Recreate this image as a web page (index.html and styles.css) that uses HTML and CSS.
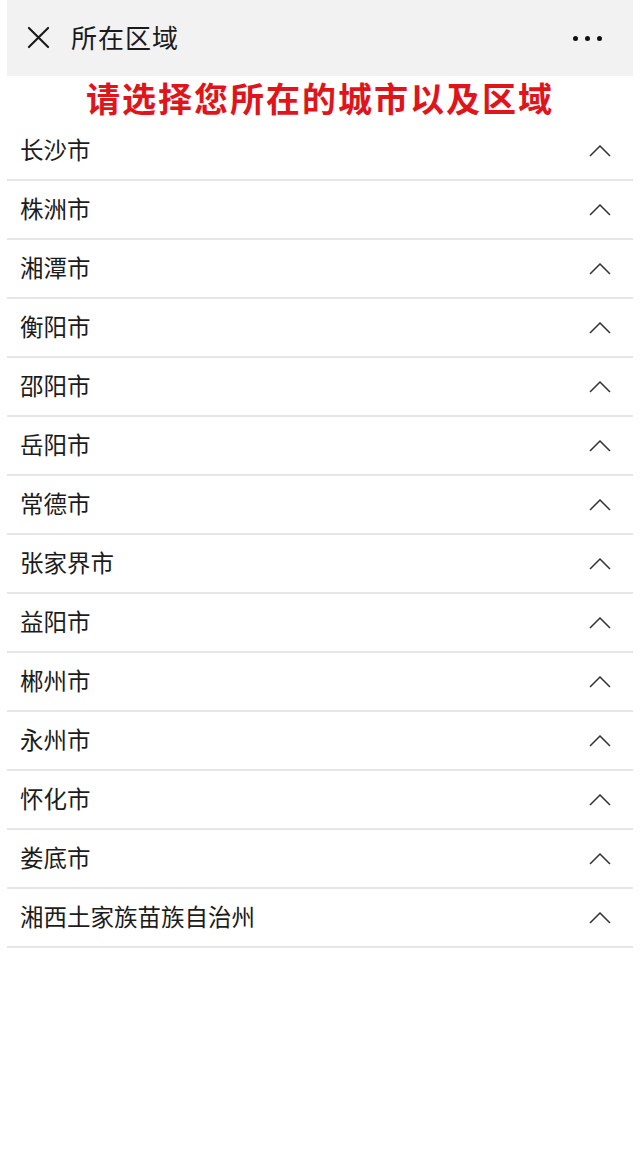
FILE: index.html
```html
<!DOCTYPE html>
<html lang="zh-CN">
<head>
<meta charset="utf-8">
<title>所在区域</title>
<link rel="stylesheet" href="styles.css">
</head>
<body>
<div class="page">
  <header class="topbar">
    <svg class="close" viewBox="0 0 24 24" width="24" height="24" aria-hidden="true">
      <path d="M2 2 L22 22 M22 2 L2 22" stroke="#1a1a1a" stroke-width="2.2" fill="none" stroke-linecap="round"/>
    </svg>
    <span class="title">所在区域</span>
    <span class="more" aria-hidden="true"><i></i><i></i><i></i></span>
  </header>
  <div class="banner">请选择您所在的城市以及区域</div>
  <ul class="list">
    <li class="row"><span>长沙市</span><svg class="chev" viewBox="0 0 22 12"><path d="M1 11 L11 1 L21 11" /></svg></li>
    <li class="row"><span>株洲市</span><svg class="chev" viewBox="0 0 22 12"><path d="M1 11 L11 1 L21 11" /></svg></li>
    <li class="row"><span>湘潭市</span><svg class="chev" viewBox="0 0 22 12"><path d="M1 11 L11 1 L21 11" /></svg></li>
    <li class="row"><span>衡阳市</span><svg class="chev" viewBox="0 0 22 12"><path d="M1 11 L11 1 L21 11" /></svg></li>
    <li class="row"><span>邵阳市</span><svg class="chev" viewBox="0 0 22 12"><path d="M1 11 L11 1 L21 11" /></svg></li>
    <li class="row"><span>岳阳市</span><svg class="chev" viewBox="0 0 22 12"><path d="M1 11 L11 1 L21 11" /></svg></li>
    <li class="row"><span>常德市</span><svg class="chev" viewBox="0 0 22 12"><path d="M1 11 L11 1 L21 11" /></svg></li>
    <li class="row"><span>张家界市</span><svg class="chev" viewBox="0 0 22 12"><path d="M1 11 L11 1 L21 11" /></svg></li>
    <li class="row"><span>益阳市</span><svg class="chev" viewBox="0 0 22 12"><path d="M1 11 L11 1 L21 11" /></svg></li>
    <li class="row"><span>郴州市</span><svg class="chev" viewBox="0 0 22 12"><path d="M1 11 L11 1 L21 11" /></svg></li>
    <li class="row"><span>永州市</span><svg class="chev" viewBox="0 0 22 12"><path d="M1 11 L11 1 L21 11" /></svg></li>
    <li class="row"><span>怀化市</span><svg class="chev" viewBox="0 0 22 12"><path d="M1 11 L11 1 L21 11" /></svg></li>
    <li class="row"><span>娄底市</span><svg class="chev" viewBox="0 0 22 12"><path d="M1 11 L11 1 L21 11" /></svg></li>
    <li class="row"><span>湘西土家族苗族自治州</span><svg class="chev" viewBox="0 0 22 12"><path d="M1 11 L11 1 L21 11" /></svg></li>
  </ul>
</div>
</body>
</html>
```

FILE: styles.css
```css
* { box-sizing: border-box; }
html, body {
  margin: 0;
  padding: 0;
  background: #ffffff;
}
body {
  font-family: "Noto Sans CJK SC", "Noto Sans", sans-serif;
  color: #1f1f1f;
}
.page {
  width: 640px;
  min-height: 1154px;
  padding: 0 7px;
}
.topbar {
  height: 76px;
  background: #f2f2f2;
  display: flex;
  align-items: center;
  padding: 0 0 0 20px;
}
.close {
  width: 23px;
  height: 23px;
  flex: none;
  margin-top: -2px;
}
.title {
  margin-left: 21px;
  font-size: 26px;
  line-height: 1;
  color: #1a1a1a;
  letter-spacing: 1px;
  margin-top: -2px;
}
.more {
  margin-left: auto;
  margin-right: 31px;
  display: flex;
  gap: 7px;
}
.more i {
  display: block;
  width: 5px;
  height: 5px;
  border-radius: 50%;
  background: #111;
}
.banner {
  height: 45px;
  line-height: 45px;
  text-align: center;
  font-size: 34px;
  font-weight: 700;
  color: #e0151c;
  letter-spacing: 2px;
  white-space: nowrap;
  margin-top: -1px;
}
.list {
  list-style: none;
  margin: 2px 0 0 0;
  padding: 0;
}
.row {
  height: 59px;
  border-bottom: 2px solid #e6e6e6;
  display: flex;
  align-items: center;
  padding: 0 22px 0 13px;
  font-size: 23.5px;
  font-weight: 400;
  color: #1c1c1c;
}
.row span {
  line-height: 1;
  margin-top: -1px;
}
.chev {
  margin-left: auto;
  width: 22px;
  height: 12px;
  flex: none;
  fill: none;
  stroke: #333;
  stroke-width: 1.5;
  stroke-linejoin: miter;
}
```
